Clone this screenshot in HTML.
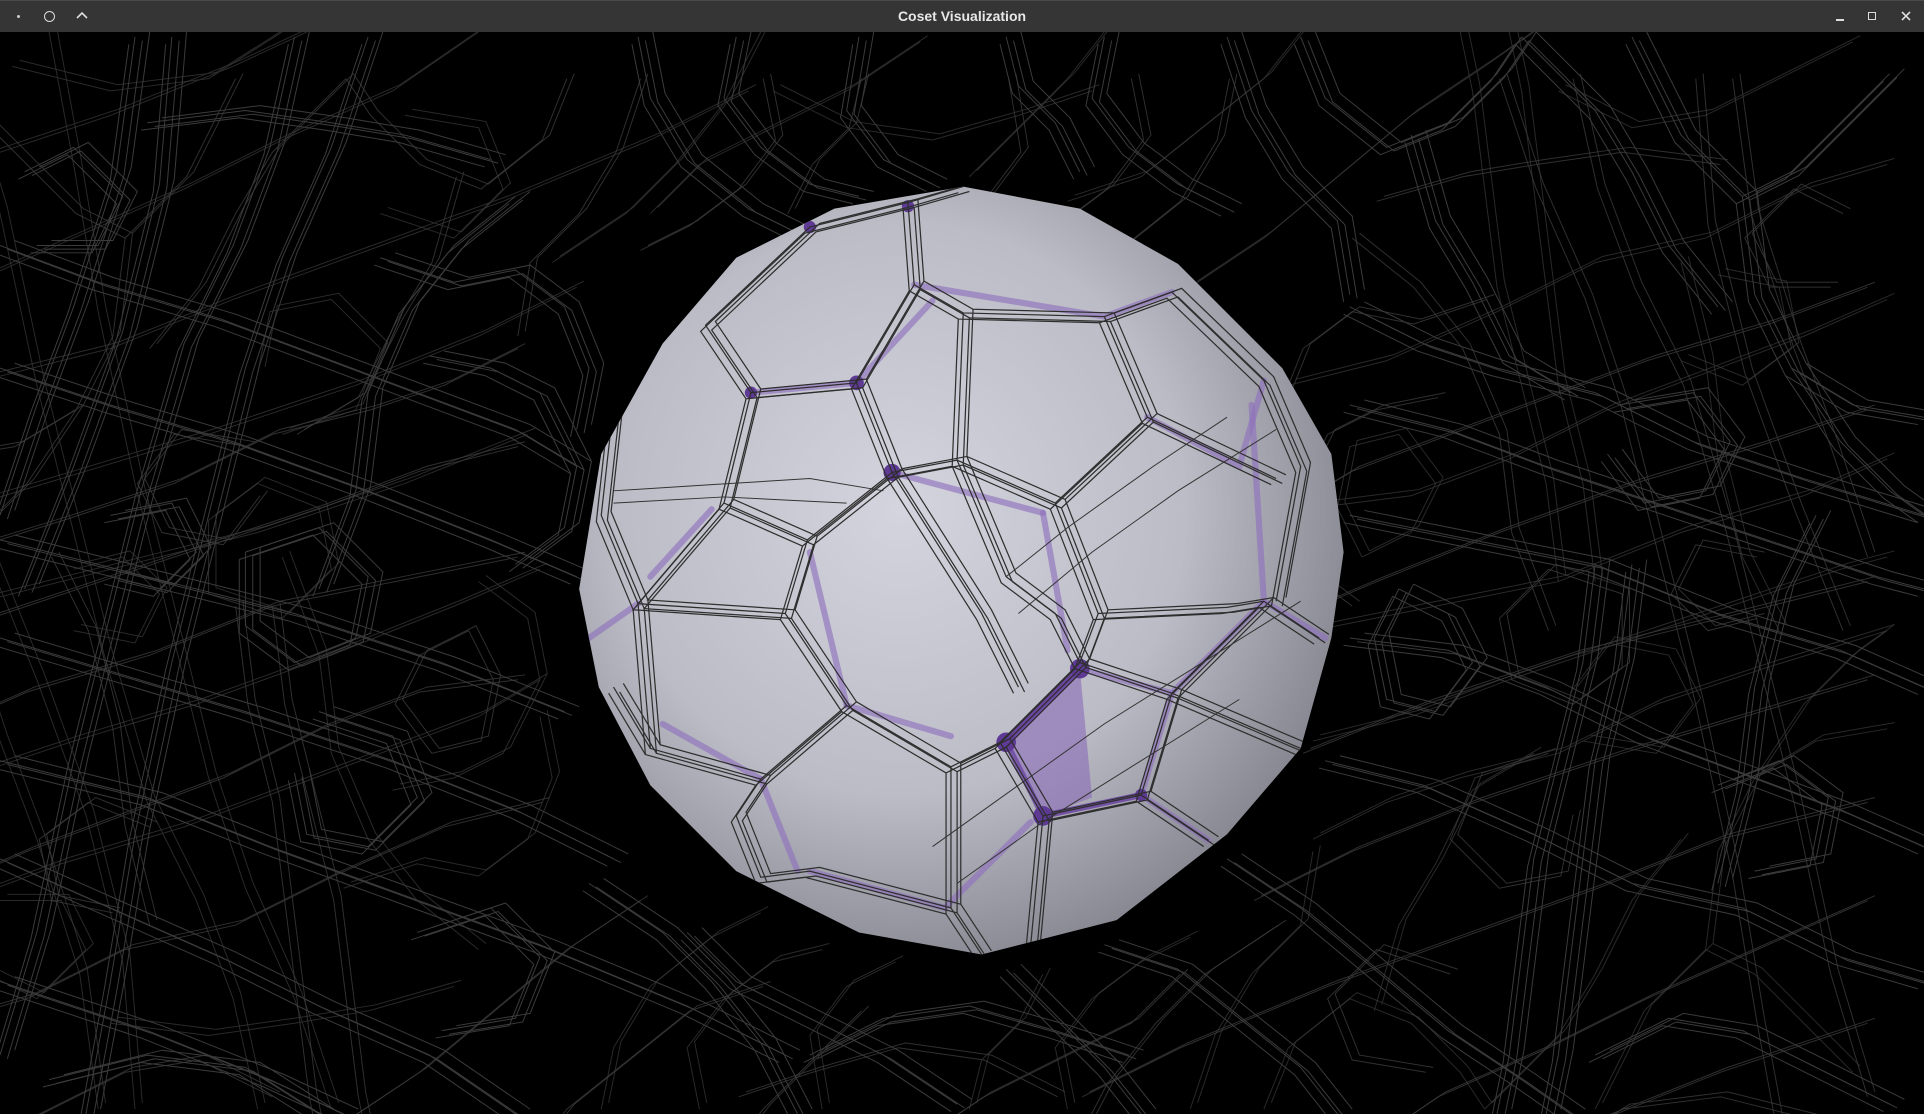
<!DOCTYPE html>
<html><head><meta charset="utf-8"><style>
html,body{margin:0;padding:0;width:1924px;height:1114px;overflow:hidden;background:#000;}
#bar{position:absolute;left:0;top:0;width:1924px;height:32px;background:#353535;border-top:1px solid #4a4a4a;box-sizing:border-box;}
#bar .t{position:absolute;left:0;right:0;top:7px;text-align:center;color:#e8e8e8;font:bold 14px "Liberation Sans","DejaVu Sans",sans-serif;}
#scene{position:absolute;left:0;top:32px;width:1924px;height:1082px;}
</style></head><body>
<div id="bar">
<div style="position:absolute;left:17px;top:14px;width:3px;height:3px;background:#ccc;border-radius:50%"></div>
<div style="position:absolute;left:44px;top:10px;width:9px;height:9px;border:1.5px solid #ddd;border-radius:50%"></div>
<svg style="position:absolute;left:76px;top:10px" width="12" height="10"><path d="M1 7 L6 2 L11 7" stroke="#ddd" stroke-width="1.6" fill="none"/></svg>
<div class="t">Coset Visualization</div>
<div style="position:absolute;left:1836px;top:18px;width:8px;height:1.5px;background:#ddd"></div>
<div style="position:absolute;left:1868px;top:11px;width:6px;height:6px;border:1.5px solid #ddd"></div>
<svg style="position:absolute;left:1900px;top:9px" width="12" height="12"><path d="M2 2L10 10M10 2L2 10" stroke="#ddd" stroke-width="1.6"/></svg>
</div>
<svg id="scene" viewBox="0 26 1568 882" preserveAspectRatio="none" xmlns="http://www.w3.org/2000/svg">
<defs>
<radialGradient id="sg" cx="0.42" cy="0.42" r="0.62">
<stop offset="0" stop-color="#d4d4de"/><stop offset="0.6" stop-color="#bcbcc6"/><stop offset="1" stop-color="#85858f"/>
</radialGradient>
<g id="bg" fill="none" stroke="#3c3c3c" stroke-width="0.8">
<polyline points="110,30 95,140 60,250 30,330 0,420"/>
<polyline points="140,30 130,150 100,270 60,380 20,480"/>
<polyline points="240,30 220,120 190,200 150,280 115,400 90,500 60,620 30,760 0,860"/>
<polyline points="300,30 270,120 230,210 200,300 170,420 140,540 110,680 90,800 70,908"/>
<polyline points="400,130 330,110 270,100 200,90 120,100"/>
<polyline points="420,160 370,200 330,250 300,320 290,400 260,480"/>
<polyline points="0,200 80,230 180,260 260,290 340,320 420,350 470,380"/>
<polyline points="0,300 90,330 190,360 300,400 400,440 470,470"/>
<polyline points="0,440 120,470 240,500 360,540 460,580"/>
<polyline points="0,520 100,550 200,580 320,620 420,660 500,700"/>
<polyline points="0,620 120,650 220,690 330,730 440,770 560,820 640,860"/>
<polyline points="0,700 90,740 180,780 260,820 350,860 420,908"/>
<polyline points="0,800 120,840 220,880 280,908"/>
<polyline points="310,210 370,230 420,220 460,250 480,300 470,350"/>
<polyline points="350,290 400,300 440,320 470,380 460,430 420,460"/>
<polyline points="200,450 260,430 300,470 290,520 240,540 200,510 200,450"/>
<polyline points="90,420 140,410 160,450 130,480 90,470"/>
<polyline points="260,580 320,600 340,650 300,690 250,680 240,630"/>
<polyline points="340,760 400,740 440,780 420,830 360,840"/>
<polyline points="520,30 530,80 560,130 610,170 650,190"/>
<polyline points="600,30 590,80 620,120 660,150 700,160"/>
<polyline points="700,30 690,90 720,130 760,150"/>
<polyline points="820,30 830,70 860,100 880,140"/>
<polyline points="900,30 890,80 920,120 960,150 1000,170"/>
<polyline points="1000,30 1020,90 1050,140 1090,180 1100,240"/>
<polyline points="1060,30 1080,80 1130,120 1180,100 1220,60 1240,30"/>
<polyline points="1150,110 1170,180 1200,230 1230,290 1280,320"/>
<polyline points="1240,30 1300,90 1330,140 1360,200 1400,250"/>
<polyline points="1330,30 1370,110 1420,160 1460,140 1500,100 1540,60"/>
<polyline points="1420,160 1430,240 1460,300 1510,330 1568,340"/>
<polyline points="1100,250 1160,280 1220,300 1300,320 1380,360 1470,390 1568,420"/>
<polyline points="1100,330 1180,350 1260,380 1350,410 1440,440 1530,470 1568,480"/>
<polyline points="1100,420 1200,440 1300,460 1400,500 1500,530 1568,560"/>
<polyline points="1100,520 1180,530 1260,560 1340,600 1420,630 1500,660 1568,690"/>
<polyline points="1080,620 1160,640 1250,680 1330,720 1420,740 1500,780 1568,800"/>
<polyline points="1000,700 1060,740 1120,790 1180,840 1240,880 1280,908"/>
<polyline points="1300,460 1290,540 1270,620 1250,700 1240,780 1230,860 1220,908"/>
<polyline points="1330,460 1320,540 1300,620 1290,700 1280,780 1270,860 1260,908"/>
<polyline points="1480,420 1450,480 1430,560 1420,640 1400,720"/>
<polyline points="1140,480 1180,500 1200,540 1170,580 1130,570 1120,520 1140,480"/>
<polyline points="1320,330 1380,320 1410,360 1390,400 1340,410 1310,370"/>
<polyline points="1400,640 1450,620 1490,650 1480,700 1430,710"/>
<polyline points="480,720 540,760 580,800 620,850 650,908"/>
<polyline points="560,760 600,800 660,830 720,860 780,900"/>
<polyline points="820,790 860,830 900,870 930,908"/>
<polyline points="900,770 960,790 1010,830 1060,870 1090,908"/>
<polyline points="660,860 720,830 790,820 860,840 920,860"/>
<polyline points="40,880 120,860 200,870 260,908"/>
<polyline points="1300,860 1360,830 1420,840 1480,870 1540,900"/>
<polyline points="1460,300 1500,360 1540,400 1568,420"/>
<polyline points="20,140 60,120 100,160 80,200 30,200"/>
</g>
<g id="ed" fill="none" stroke="#2e2e2e" stroke-width="1">
<polyline points="612,320 698,312 727,385 658,440 590,410 612,320"/>
<polyline points="698,312 745,232 785,255 900,258 935,340 860,410 780,375 727,385"/>
<polyline points="785,255 780,375"/>
<polyline points="860,410 895,500 880,540 815,605 775,625 690,575 640,500 658,440"/>
<polyline points="640,500 520,492 590,410"/>
<polyline points="520,492 490,420 500,330"/>
<polyline points="612,320 575,265 660,185 740,165 785,152"/>
<polyline points="745,232 740,165"/>
<polyline points="900,258 955,238 1030,310 1060,380 1040,490"/>
<polyline points="935,340 1040,390"/>
<polyline points="895,500 1000,495 1030,490 1075,520"/>
<polyline points="880,540 955,565 1030,490"/>
<polyline points="955,565 930,648 850,665 815,605"/>
<polyline points="690,575 620,635 530,610 520,492"/>
<polyline points="620,635 600,665 620,715 660,710 775,740 775,625"/>
<polyline points="850,665 840,770"/>
<polyline points="775,740 800,778"/>
<polyline points="930,648 985,685"/>
<polyline points="530,610 500,560"/>
<polyline points="780,375 820,470 860,500 880,540"/>
<polyline points="727,385 800,500 830,560"/>
<polyline points="955,565 1060,610"/>
</g>
<clipPath id="sc"><polygon points="785,152 880,170 960,215 1045,300 1085,370 1095,450 1085,520 1060,610 1000,680 910,750 800,778 700,760 600,710 530,640 488,560 472,480 490,370 540,280 600,210 680,170"/></clipPath>
</defs>
<rect x="0" y="26" width="1568" height="882" fill="#000"/>
<use href="#bg"/>
<use href="#bg" transform="translate(6,3)"/>
<use href="#bg" transform="translate(-5,6)"/>
<use href="#bg" transform="translate(12,-4)"/>
<use href="#bg" transform="translate(1568,0) scale(-1,1) translate(40,30)" opacity="0.8"/>
<use href="#bg" transform="translate(1568,0) scale(-1,1) translate(46,34)" opacity="0.8"/>
<use href="#bg" transform="translate(0,934) scale(1,-1) translate(-30,0)" opacity="0.7"/>
<use href="#bg" transform="translate(0,934) scale(1,-1) translate(-24,5)" opacity="0.7"/>
<polygon points="785,152 880,170 960,215 1045,300 1085,370 1095,450 1085,520 1060,610 1000,680 910,750 800,778 700,760 600,710 530,640 488,560 472,480 490,370 540,280 600,210 680,170" fill="url(#sg)"/>
<g clip-path="url(#sc)">
<g fill="none" stroke="#8f72bd" stroke-opacity="0.65" stroke-width="5" stroke-linecap="round">
<polyline points="612,320 698,312"/>
<polyline points="727,385 850,418"/>
<polyline points="660,450 690,575"/>
<polyline points="690,575 775,600"/>
<polyline points="745,232 900,258 955,238"/>
<polyline points="520,492 480,520"/>
<polyline points="580,415 530,470"/>
<polyline points="698,312 760,245"/>
<polyline points="850,418 870,530"/>
<polyline points="935,340 1010,380 1030,310"/>
<polyline points="1030,490 955,565 880,545"/>
<polyline points="955,565 930,648"/>
<polyline points="930,648 985,685"/>
<polyline points="620,635 540,590"/>
<polyline points="660,710 770,740 840,670"/>
<polyline points="620,635 650,710"/>
<polyline points="1020,330 1030,490 1080,520"/>
<polyline points="850,665 930,648"/>
</g>
<polygon points="820,605 880,545 890,650 850,665" fill="#8a6ab8" fill-opacity="0.6"/>
<polyline points="820,605 880,545" stroke="#6a46a0" stroke-width="6" fill="none"/>
<polyline points="820,605 850,665 930,648" stroke="#6a46a0" stroke-width="5" fill="none" stroke-opacity="0.8"/>
<g fill="#5e3a94"><circle cx="880" cy="545" r="8"/><circle cx="820" cy="605" r="8"/><circle cx="850" cy="665" r="8"/><circle cx="727" cy="385" r="7"/><circle cx="698" cy="312" r="6"/><circle cx="612" cy="320" r="5"/><circle cx="930" cy="648" r="5"/><circle cx="660" cy="185" r="5"/><circle cx="740" cy="168" r="5"/></g>
<use href="#ed"/>
<use href="#ed" transform="translate(5,4)"/>
<use href="#ed" transform="translate(-4,5)"/>
<use href="#ed" transform="translate(8,-3)"/>
<g stroke="#333" stroke-width="0.8" fill="none">
<polyline points="820,470 870,430 940,380 1000,340"/>
<polyline points="830,500 890,450 960,400 1040,350"/>
<polyline points="760,690 830,640 900,590 980,540 1060,490"/>
<polyline points="780,720 850,670 930,620 1010,570"/>
<polyline points="500,400 580,395 660,390 720,400"/>
<polyline points="500,410 590,405 690,410"/>
</g>
</g>
</svg>
</body></html>
